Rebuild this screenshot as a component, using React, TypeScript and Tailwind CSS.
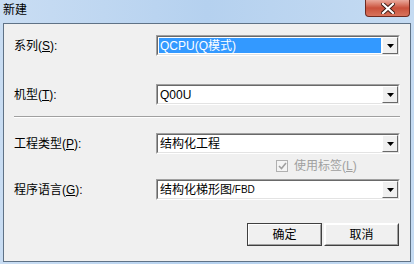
import React from "react";

const font = { fontFamily: '"Liberation Sans", "Noto Sans CJK SC", sans-serif' };

function Mn({ c }: { c: string }) {
  return (
    <>
      (<span className="underline underline-offset-[1px]">{c}</span>)
    </>
  );
}

function Combo({ children, selected }: { children: React.ReactNode; selected?: boolean }) {
  return (
    <div className="w-[244px] h-[21px] border border-t-[#a0a0a0] border-l-[#a0a0a0] border-b-white border-r-white">
      <div className="h-full flex border border-t-[#696969] border-l-[#696969] border-b-[#e3e3e3] border-r-[#e3e3e3] bg-white">
        <div className="flex-1 flex items-center p-[1px]">
          <div className={"h-full w-full flex items-center pl-[1px] text-[12px] leading-none " + (selected ? "bg-[#3399ff] text-white" : "text-black")}>
            {children}
          </div>
        </div>
        <div className="w-[16px] h-full border border-t-white border-l-white border-b-[#696969] border-r-[#696969] bg-[#f0f0f0] flex items-center justify-center">
          <svg width="7" height="4" viewBox="0 0 7 4">
            <path d="M0 0H7L3.5 4Z" fill="#000" />
          </svg>
        </div>
      </div>
    </div>
  );
}

function Row({ label, children, className }: { label: React.ReactNode; children: React.ReactNode; className: string }) {
  return (
    <div className={"flex items-center h-[21px] " + className}>
      <div className="w-[142px] text-[12px] leading-none text-black">{label}</div>
      {children}
    </div>
  );
}

function Btn({ label, def }: { label: string; def?: boolean }) {
  return (
    <div className={"w-[75px] h-[23px] border " + (def ? "border-[#404040]" : "border-t-white border-l-white border-b-[#404040] border-r-[#404040]")}>
      <div className="h-full border border-t-white border-l-white border-b-[#a0a0a0] border-r-[#a0a0a0] bg-[#f0f0f0] flex items-center justify-center text-[12px] text-black">
        {label}
      </div>
    </div>
  );
}

export default function App() {
  return (
    <div className="w-[414px] h-[264px] relative bg-gradient-to-r from-[#c9ddf3] via-[#b5d1ef] to-[#c5dbf2] overflow-hidden" style={font}>
      <div className="h-[23px] flex items-center pl-[3px] pb-[3px] text-[12px] text-black">新建</div>
      <div className="absolute right-[4px] top-0 w-[45px] h-[17px] rounded-b-[4px] border border-t-0 border-[#6d2a20] bg-gradient-to-b from-[#e9a99c] via-[#c9503b] to-[#d8735c] flex items-center justify-center">
        <svg width="14" height="11" viewBox="0 0 14 11">
          <path d="M2 1L12 10M12 1L2 10" stroke="#3b1a14" strokeWidth="4" strokeLinecap="square" />
          <path d="M2 1L12 10M12 1L2 10" stroke="#fff" strokeWidth="2.2" strokeLinecap="square" />
        </svg>
      </div>
      <div className="ml-[3px] w-[408px] h-[239px] border border-[#5f7286] bg-[#f0f0f0] pl-[10px] flex flex-col">
        <Row label={<>系列<Mn c="S" />:</>} className="mt-[11px]">
          <Combo selected>QCPU(Q模式)</Combo>
        </Row>
        <Row label={<>机型<Mn c="T" />:</>} className="mt-[28px]">
          <Combo>Q00U</Combo>
        </Row>
        <div className="mt-[11px] w-[386px] h-[2px] border-t border-t-[#a0a0a0] border-b border-b-white" />
        <Row label={<>工程类型<Mn c="P" />:</>} className="mt-[15px]">
          <Combo>结构化工程</Combo>
        </Row>
        <div className="mt-[5px] h-[14px] flex items-center pl-[262px] text-[12px] text-[#a0a0a0] leading-none">
          <div className="w-[12px] h-[12px] border border-[#b0b0b0] bg-[#f4f4f4] flex items-center justify-center mr-[6px]">
            <svg width="9" height="8" viewBox="0 0 9 8">
              <path d="M1 4L3.5 6.5L8 1" stroke="#a0a0a0" strokeWidth="1.6" fill="none" />
            </svg>
          </div>
          <span>使用标签<Mn c="L" /></span>
        </div>
        <Row label={<>程序语言<Mn c="G" />:</>} className="mt-[6px]">
          <Combo>
            结构化梯形图<span className="text-[10px]">/FBD</span>
          </Combo>
        </Row>
        <div className="mt-[23px] flex justify-end gap-[2px] pr-[11px]">
          <Btn label="确定" def />
          <Btn label="取消" />
        </div>
      </div>
    </div>
  );
}
